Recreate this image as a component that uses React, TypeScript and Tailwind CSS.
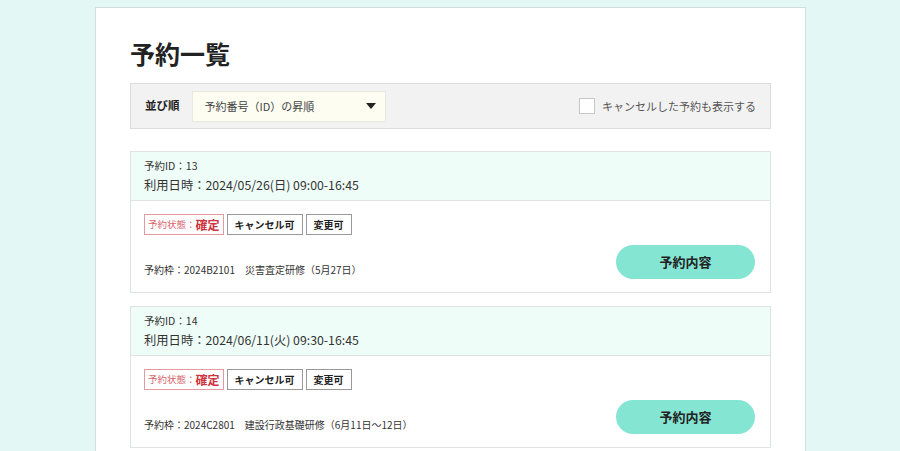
const font = '"Noto Sans CJK JP", "Noto Sans", sans-serif';

type Reservation = {
  id: number;
  datetime: string;
  frame: string;
};

const reservations: Reservation[] = [
  { id: 13, datetime: '2024/05/26(日) 09:00-16:45', frame: '2024B2101　災害査定研修（5月27日）' },
  { id: 14, datetime: '2024/06/11(火) 09:30-16:45', frame: '2024C2801　建設行政基礎研修（6月11日～12日）' },
];

function ReservationCard({ r }: { r: Reservation }) {
  return (
    <section className="border border-[#dfe3e3] bg-white">
      <div className="flex h-[49px] flex-col justify-center border-b border-[#dfe3e3] bg-[#effdf8] px-[13px] text-[#333]">
        <p className="text-[10.5px] leading-[18px]">予約ID：{r.id}</p>
        <p className="text-[12.3px] leading-[20px]">利用日時：{r.datetime}</p>
      </div>
      <div className="flex h-[91px] items-start justify-between pl-[13px] pr-[15px]">
        <div className="flex h-full flex-col justify-between pt-[13px] pb-[14px]">
          <div className="flex gap-[3px]">
            <span className="flex h-[21px] items-center border border-[#e59aa0] px-[3px]">
              <span className="text-[9.5px] text-[#d9646e]">予約状態：</span>
              <span className="text-[12px] font-bold text-[#cf3340]">確定</span>
            </span>
            <span className="flex h-[21px] items-center border border-[#999] px-[7px] text-[10px] font-bold text-[#222]">
              キャンセル可
            </span>
            <span className="flex h-[21px] items-center border border-[#999] px-[7px] text-[10px] font-bold text-[#222]">
              変更可
            </span>
          </div>
          <p className="text-[10px] leading-[16px] text-[#333]">予約枠：{r.frame}</p>
        </div>
        <button className="mt-[44px] h-[34px] w-[139px] rounded-full bg-[#85e5d3] text-[13px] font-bold text-[#222]">
          予約内容
        </button>
      </div>
    </section>
  );
}

export default function App() {
  return (
    <div className="h-[451px] w-[900px] overflow-hidden bg-[#e3f7f4]" style={{ fontFamily: font }}>
      <div className="ml-[95px] mt-[7px] w-[711px] border border-[#d5dddc] bg-white px-[34px] pt-[27px] pb-10">
        <h1 className="text-[25px] font-bold leading-[36px] text-[#222]">予約一覧</h1>
        <div className="mt-[12px] flex h-[46px] items-center justify-between border border-[#dcdcdc] bg-[#f2f2f2] pl-[14px] pr-[14px]">
          <div className="flex items-center gap-[12px]">
            <span className="text-[11.5px] font-bold text-[#222]">並び順</span>
            <div className="flex h-[31px] w-[194px] items-center justify-between border border-[#e8e8e0] bg-[#fdfdf2] pl-[12px] pr-[9px]">
              <span className="text-[11px] text-[#444]">予約番号（ID）の昇順</span>
              <svg width="10" height="6" viewBox="0 0 10 6">
                <path d="M0 0h10L5 6z" fill="#222" />
              </svg>
            </div>
          </div>
          <label className="flex items-center gap-[7px]">
            <span className="h-[16px] w-[16px] border border-[#c8c8c8] bg-white" />
            <span className="text-[11px] text-[#555]">キャンセルした予約も表示する</span>
          </label>
        </div>
        <div className="mt-[22px] flex flex-col gap-[13px]">
          {reservations.map((r) => (
            <ReservationCard key={r.id} r={r} />
          ))}
        </div>
      </div>
    </div>
  );
}
